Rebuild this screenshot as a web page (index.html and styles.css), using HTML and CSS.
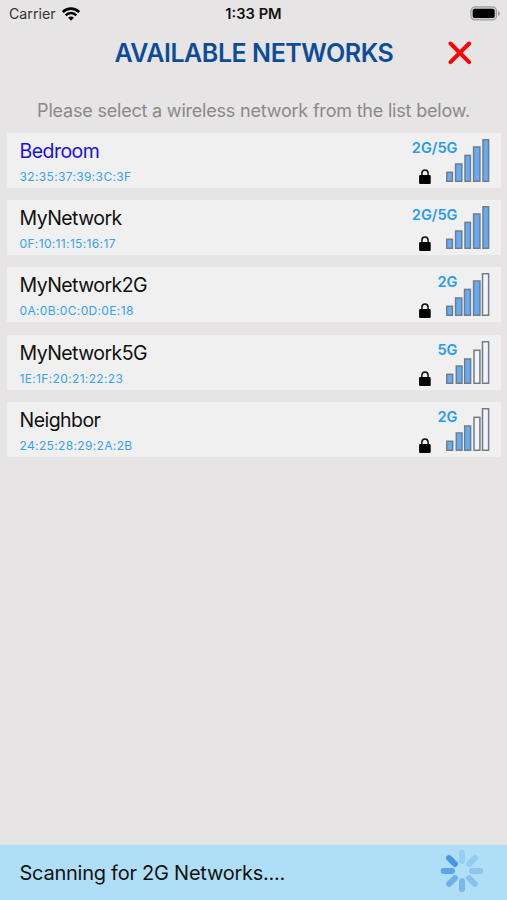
FILE: index.html
```html
<!DOCTYPE html>
<html lang="en">
<head>
    <meta charset="UTF-8">
    <meta name="viewport" content="width=device-width, initial-scale=1.0">
    <title>Available Networks</title>
    <link rel="stylesheet" href="styles.css">
</head>
<body>
    <svg class="defs" width="0" height="0">
        <symbol id="lock" viewBox="0 0 12 15">
            <path d="M2.9 7V4.3a3.1 3.3 0 0 1 6.2 0V7" fill="none" stroke="#111" stroke-width="1.5"/>
            <rect x="0.1" y="6" width="11.6" height="8.9" rx="1" fill="#000"/>
        </symbol>
    </svg>

    <div class="status-bar">
        <div class="carrier">
            <span class="carrier-name">Carrier</span>
            <svg class="wifi" width="18" height="14" viewBox="0 0 18 14">
                <path d="M0.8 5a11.600 11.600 0 0 1 16.400 0" fill="none" stroke="#000" stroke-width="2.700"/>
                <path d="M3.7 8.300a7.400 7.400 0 0 1 10.600 0" fill="none" stroke="#000" stroke-width="2.400"/>
                <path d="M9 13.700L6 10.800a4.100 4.100 0 0 1 6 0z" fill="#000"/>
            </svg>
        </div>
        <span class="time">1:33 PM</span>
        <svg class="battery" width="31" height="15" viewBox="0 0 31 15">
            <rect x="0.9" y="0.9" width="25.6" height="13" rx="4" fill="#d0cfd0" stroke="#a09fa0" stroke-width="1.2"/>
            <rect x="2.7" y="2.7" width="22" height="9.4" rx="2" fill="#000"/>
            <path d="M28 5v5q2-1 2-2.500t-2-2.500z" fill="#a09fa0"/>
        </svg>
    </div>

    <div class="header">
        <h1>AVAILABLE NETWORKS</h1>
        <button class="close" aria-label="Close">
            <svg width="24" height="24" viewBox="0 0 24 24">
                <path d="M2.500 2.500l18.600 18.600M21.100 2.500L2.500 21.100" stroke="#fb0207" stroke-width="4" stroke-linecap="round"/>
            </svg>
        </button>
    </div>

    <p class="hint">Please select a wireless network from the list below.</p>

    <div class="networks">
        <div class="network current">
            <div class="info">
                <div class="name">Bedroom</div>
                <div class="mac">32:35:37:39:3C:3F</div>
            </div>
            <div class="band">
                <span>2G/5G</span>
                <svg class="lock"><use href="#lock"/></svg>
            </div>
            <svg class="signal level-5" viewBox="0 0 44 43">
                <rect x="0.8" y="33.3" width="5.600" height="9"/>
                <rect x="9.600" y="25" width="6.200" height="17.300"/>
                <rect x="19" y="16.400" width="5.400" height="25.900"/>
                <rect x="27.600" y="8" width="6.300" height="34.300"/>
                <rect x="37" y="0.700" width="5.600" height="41.600"/>
            </svg>
        </div>
        <div class="network">
            <div class="info">
                <div class="name">MyNetwork</div>
                <div class="mac">0F:10:11:15:16:17</div>
            </div>
            <div class="band">
                <span>2G/5G</span>
                <svg class="lock"><use href="#lock"/></svg>
            </div>
            <svg class="signal level-5" viewBox="0 0 44 43">
                <rect x="0.8" y="33.3" width="5.600" height="9"/>
                <rect x="9.600" y="25" width="6.200" height="17.300"/>
                <rect x="19" y="16.400" width="5.400" height="25.900"/>
                <rect x="27.600" y="8" width="6.300" height="34.300"/>
                <rect x="37" y="0.700" width="5.600" height="41.600"/>
            </svg>
        </div>
        <div class="network">
            <div class="info">
                <div class="name">MyNetwork2G</div>
                <div class="mac">0A:0B:0C:0D:0E:18</div>
            </div>
            <div class="band">
                <span>2G</span>
                <svg class="lock"><use href="#lock"/></svg>
            </div>
            <svg class="signal level-4" viewBox="0 0 44 43">
                <rect x="0.8" y="33.3" width="5.600" height="9"/>
                <rect x="9.600" y="25" width="6.200" height="17.300"/>
                <rect x="18.500" y="16.400" width="5.900" height="25.900"/>
                <rect x="27.600" y="8" width="6.300" height="34.300"/>
                <rect x="36.500" y="0.700" width="6.100" height="41.600"/>
            </svg>
        </div>
        <div class="network">
            <div class="info">
                <div class="name">MyNetwork5G</div>
                <div class="mac">1E:1F:20:21:22:23</div>
            </div>
            <div class="band">
                <span>5G</span>
                <svg class="lock"><use href="#lock"/></svg>
            </div>
            <svg class="signal level-3" viewBox="0 0 44 43">
                <rect x="0.8" y="33.3" width="5.900" height="9"/>
                <rect x="10.300" y="25" width="5.700" height="17.300"/>
                <rect x="18.700" y="18" width="5.900" height="24.300"/>
                <rect x="28" y="9.300" width="5.900" height="33"/>
                <rect x="36.500" y="0.700" width="6.100" height="41.600"/>
            </svg>
        </div>
        <div class="network">
            <div class="info">
                <div class="name">Neighbor</div>
                <div class="mac">24:25:28:29:2A:2B</div>
            </div>
            <div class="band">
                <span>2G</span>
                <svg class="lock"><use href="#lock"/></svg>
            </div>
            <svg class="signal level-3" viewBox="0 0 44 43">
                <rect x="0.8" y="33.3" width="5.900" height="9"/>
                <rect x="10.300" y="25" width="5.700" height="17.300"/>
                <rect x="18.700" y="18" width="5.900" height="24.300"/>
                <rect x="28" y="9.300" width="5.900" height="33"/>
                <rect x="36.500" y="0.700" width="6.100" height="41.600"/>
            </svg>
        </div>
    </div>

    <div class="scan-bar">
        <span class="scan-text">Scanning for 2G Networks....</span>
        <svg class="spinner" width="44" height="44" viewBox="-22 -22 44 44">
            <g stroke-width="6" stroke-linecap="round">
                <path d="M0-18.300V-10" stroke="#97cef1"/>
                <path d="M0-18.300V-10" stroke="#94cbf0" transform="rotate(45)"/>
                <path d="M0-18.300V-10" stroke="#8fc6ef" transform="rotate(90)"/>
                <path d="M0-18.300V-10" stroke="#88c0ee" transform="rotate(135)"/>
                <path d="M0-18.300V-10" stroke="#7db8ed" transform="rotate(180)"/>
                <path d="M0-18.300V-10" stroke="#70afec" transform="rotate(225)"/>
                <path d="M0-18.300V-10" stroke="#5ca4e9" transform="rotate(270)"/>
                <path d="M0-18.300V-10" stroke="#4797e6" transform="rotate(315)"/>
            </g>
        </svg>
    </div>
</body>
</html>
```
FILE: styles.css
```css
* {
    box-sizing: border-box;
}
body {
    display: flex;
    flex-direction: column;
    height: 900px;
    margin: 0;
    font-family: Inter, "Liberation Sans", sans-serif;
    background-color: #e6e4e5;
    color: #111;
    overflow: hidden;
}
svg {
    display: block;
    flex-shrink: 0;
}
.defs {
    position: absolute;
}
.status-bar {
    display: grid;
    grid-template-columns: 1fr auto 1fr;
    align-items: center;
    height: 27px;
    padding: 0 6px 0 9px;
}
.carrier {
    display: flex;
    align-items: center;
    gap: 6px;
}
.carrier-name {
    color: #333;
    font-size: 14.2px;
}
.time {
    padding-right: 3px;
    font-size: 14.7px;
    font-weight: 600;
}
.battery {
    justify-self: end;
}
.header {
    display: flex;
    align-items: center;
    height: 52px;
    padding-left: 114.5px;
}
h1 {
    width: 333px;
    margin: 0;
    font-size: 25px;
    font-weight: 600;
    letter-spacing: -0.45px;
    color: #0c4c98;
    white-space: nowrap;
}
.close {
    padding: 0;
    border: none;
    background: none;
    cursor: pointer;
}
.hint {
    height: 54px;
    margin: 0;
    padding-top: 20px;
    font-size: 18px;
    line-height: 23px;
    letter-spacing: -0.2px;
    text-align: center;
    color: #8a898a;
    white-space: nowrap;
}
.networks {
    display: flex;
    flex-direction: column;
    gap: 12.2px;
    flex: 1;
    padding: 0 6px 0 7px;
}
.network {
    display: flex;
    height: 55px;
    padding: 6px 11.5px 0 12.5px;
    background-color: #f0f0f0;
}
.info {
    flex: 1;
}
.name {
    font-size: 19.5px;
    line-height: 25px;
    letter-spacing: -0.55px;
}
.current .name {
    color: #1a12d6;
}
.mac {
    margin-top: 5px;
    font-size: 12px;
    line-height: 16px;
    letter-spacing: 0.35px;
    color: #36a2f3;
}
.band {
    display: flex;
    flex-direction: column;
    align-items: flex-end;
    width: 60px;
    margin-right: -12px;
    font-size: 14.6px;
    font-weight: 600;
    line-height: 18px;
    color: #269cf2;
}
.lock {
    width: 12px;
    height: 15px;
    margin: 12px 27px 0 0;
}
.signal {
    width: 44px;
    height: 43px;
}
.signal rect {
    fill: #62adfa;
    stroke: #747b84;
    stroke-width: 1.5;
}
.level-4 rect:nth-child(n+5),
.level-3 rect:nth-child(n+4) {
    fill: #f1f5fb;
}
.scan-bar {
    display: flex;
    align-items: center;
    justify-content: space-between;
    height: 55px;
    padding: 0 23px 3px 19.5px;
    background-color: #afdff6;
}
.scan-text {
    padding-top: 3px;
    font-size: 20px;
    letter-spacing: -0.25px;
}
```
